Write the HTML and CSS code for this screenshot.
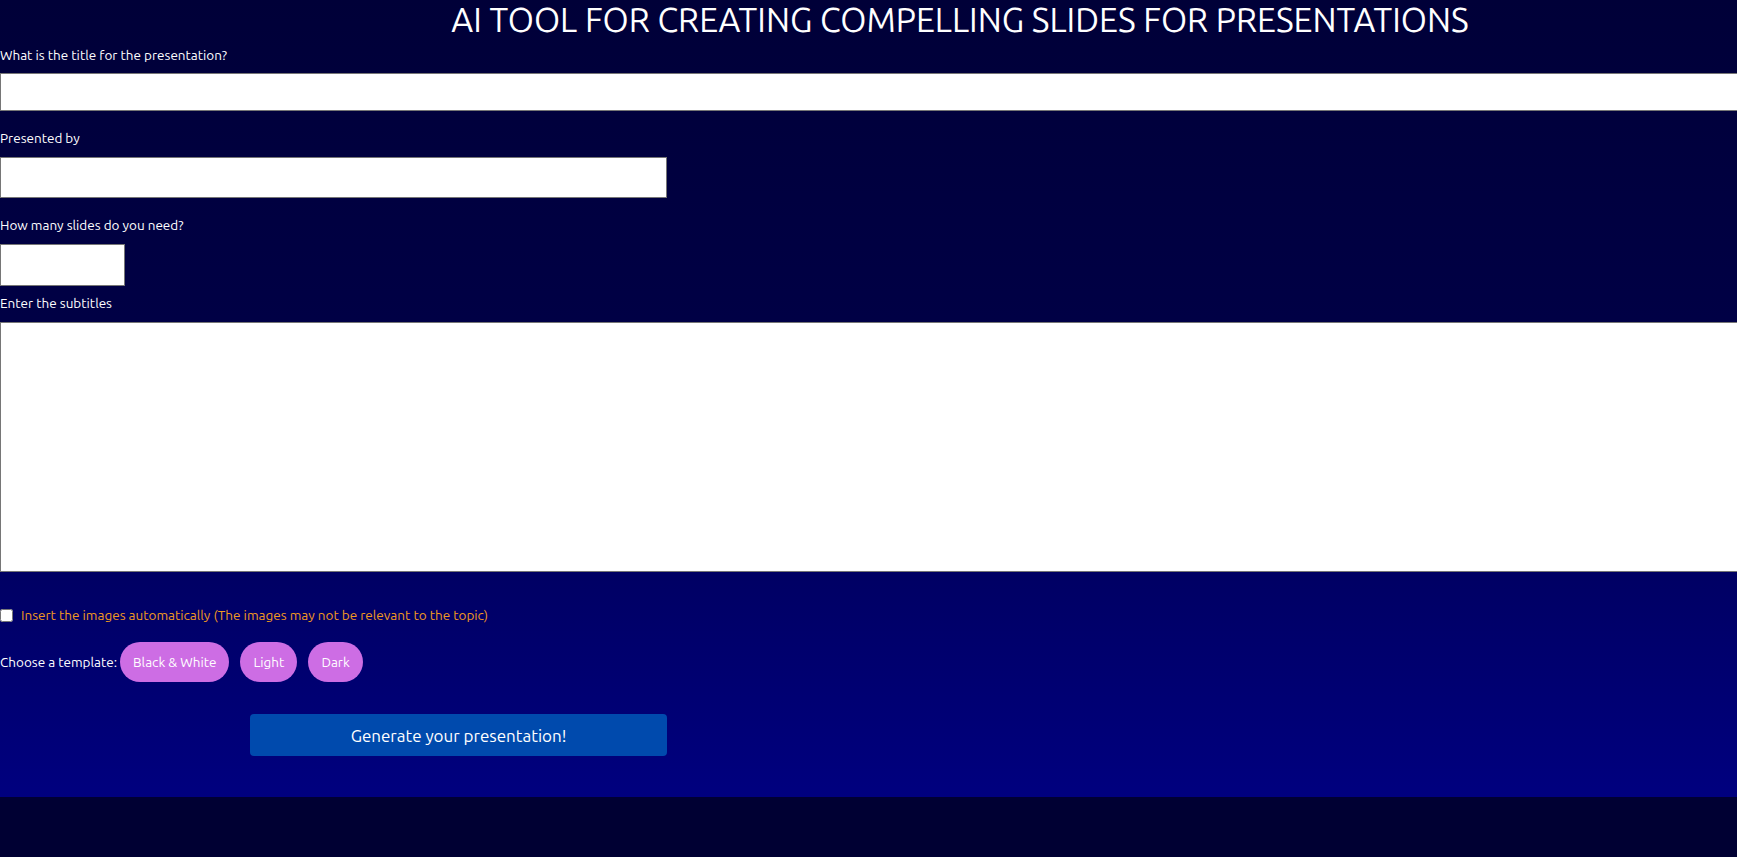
FILE: index.html
```html
<!DOCTYPE html>
<html lang="en">
<head>
<meta charset="utf-8">
<title>AI Tool for Creating Compelling Slides</title>
<link rel="stylesheet" href="styles.css">
</head>
<body>
<main class="page">
  <h1 class="title">AI TOOL FOR CREATING COMPELLING SLIDES FOR PRESENTATIONS</h1>
  <form class="form">
    <label class="label label-first" for="title">What is the title for the presentation?</label>
    <input class="field field-title" id="title" type="text">
    <label class="label label-gap" for="author">Presented by</label>
    <input class="field field-author" id="author" type="text">
    <label class="label label-gap2" for="count">How many slides do you need?</label>
    <input class="field field-count" id="count" type="number">
    <label class="label label-tight" for="subs">Enter the subtitles</label>
    <textarea class="field field-subs" id="subs"></textarea>
    <div class="check-row">
      <input class="check" id="imgs" type="checkbox">
      <label class="check-label" for="imgs">Insert the images automatically (The images may not be relevant to the topic)</label>
    </div>
    <div class="template-row">
      <span class="template-label">Choose a template:</span>
      <button type="button" class="pill">Black &amp; White</button>
      <button type="button" class="pill">Light</button>
      <button type="button" class="pill">Dark</button>
    </div>
    <div class="submit-row">
      <button type="button" class="generate">Generate your presentation!</button>
    </div>
  </form>
</main>
</body>
</html>
```
FILE: styles.css
```css
html, body {
  margin: 0;
  padding: 0;
  overflow: hidden;
  background: #000033;
}
body {
  font-family: "Ubuntu", "Lato", "Noto Sans", sans-serif;
  color: #ffffff;
}
.page {
  width: 1920px;
  height: 797px;
  background: linear-gradient(to bottom, #000038 0%, #000045 40%, #00007f 100%);
}
.title {
  margin: 0;
  text-align: center;
  font-weight: 400;
  font-size: 33.7px;
  line-height: 40px;
  color: #ffffff;
}
.form {
  display: flex;
  flex-direction: column;
  align-items: flex-start;
}
.label {
  display: block;
  font-size: 13.5px;
  line-height: 17px;
  color: #ffffff;
}
.label-first { margin-top: 7px; margin-bottom: 9px; }
.label-gap { margin-top: 19px; margin-bottom: 10px; }
.label-gap2 { margin-top: 19px; margin-bottom: 10px; }
.label-tight { margin-top: 9px; margin-bottom: 10px; }
.field {
  box-sizing: border-box;
  margin: 0;
  border: 1px solid #767676;
  background: #ffffff;
  font-family: inherit;
  font-size: 14px;
}
.field-title { width: 1920px; height: 38px; }
.field-author { width: 667px; height: 41px; }
.field-count { width: 125px; height: 42px; }
.field-subs { width: 1920px; height: 250px; resize: none; }
.check-row {
  display: flex;
  align-items: center;
  margin-top: 37px;
  height: 13px;
}
.check {
  width: 13px;
  height: 13px;
  margin: 0;
}
.check-label {
  margin-left: 8px;
  font-size: 13.5px;
  line-height: 17px;
  color: #f29a1e;
}
.template-row {
  display: flex;
  align-items: center;
  margin-top: 20px;
}
.template-label {
  font-size: 13.5px;
  line-height: 17px;
  margin-right: 3px;
}
.pill {
  height: 40px;
  padding: 0 13px;
  margin: 0 11px 0 0;
  border: none;
  border-radius: 20px;
  background: #cd6de4;
  color: #ffffff;
  font-family: inherit;
  font-size: 13.5px;
}
.submit-row {
  margin-top: 32px;
  padding-left: 250px;
}
.generate {
  width: 417px;
  height: 42px;
  border: none;
  border-radius: 4px;
  background: #004aad;
  color: #ffffff;
  font-family: inherit;
  font-size: 17px;
}
```
